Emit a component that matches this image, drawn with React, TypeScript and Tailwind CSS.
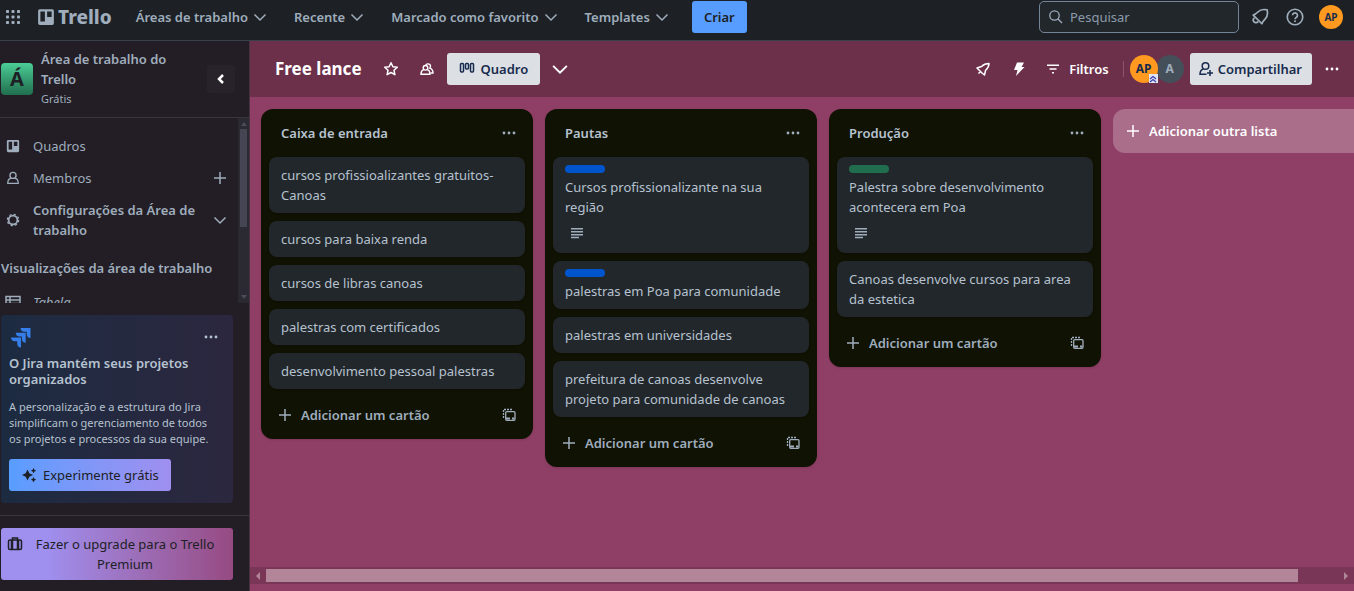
import type { ReactNode } from "react";
import clsx from "clsx";

interface IconProps {
	children: ReactNode;
	className?: string;
	viewBox?: string;
	width?: number;
}

interface Card {
	title: string;
	label?: "blue" | "green";
	description?: boolean;
}

interface List {
	name: string;
	cards: Card[];
}

const lists: List[] = [
	{
		name: "Caixa de entrada",
		cards: [
			{ title: "cursos profissioalizantes gratuitos- Canoas" },
			{ title: "cursos para baixa renda" },
			{ title: "cursos de libras canoas" },
			{ title: "palestras com certificados" },
			{ title: "desenvolvimento pessoal palestras" },
		],
	},
	{
		name: "Pautas",
		cards: [
			{
				title: "Cursos profissionalizante na sua região",
				label: "blue",
				description: true,
			},
			{ title: "palestras em Poa para comunidade", label: "blue" },
			{ title: "palestras em universidades" },
			{ title: "prefeitura de canoas desenvolve projeto para comunidade de canoas" },
		],
	},
	{
		name: "Produção",
		cards: [
			{
				title: "Palestra sobre desenvolvimento acontecera em Poa",
				label: "green",
				description: true,
			},
			{ title: "Canoas desenvolve cursos para area da estetica" },
		],
	},
];

const menus = ["Áreas de trabalho", "Recente", "Marcado como favorito", "Templates"];

const Icon = ({ children, className, viewBox = "0 0 16 16", width = 1.5 }: IconProps) => (
	<svg
		className={clsx("shrink-0", className ?? "w-4 h-4")}
		viewBox={viewBox}
		fill="none"
		stroke="currentColor"
		strokeWidth={width}
		aria-hidden="true"
	>
		{children}
	</svg>
);

const ChevronDown = ({ className }: { className?: string }) => (
	<Icon className={className}>
		<path d="M2.5 5.5 8 11l5.5-5.5" />
	</Icon>
);

const Plus = () => (
	<Icon>
		<path d="M8 2v12M2 8h12" />
	</Icon>
);

const Dots = ({ className }: { className?: string }) => (
	<Icon className={className}>
		<g fill="currentColor" stroke="none">
			<circle cx="3" cy="8" r="1.4" />
			<circle cx="8" cy="8" r="1.4" />
			<circle cx="13" cy="8" r="1.4" />
		</g>
	</Icon>
);

const BoardIcon = ({ className }: { className?: string }) => (
	<Icon className={className}>
		<path
			fill="currentColor"
			stroke="none"
			fillRule="evenodd"
			d="M2.5 1h11A1.5 1.5 0 0 1 15 2.5v11a1.5 1.5 0 0 1-1.5 1.5h-11A1.5 1.5 0 0 1 1 13.5v-11A1.5 1.5 0 0 1 2.5 1ZM3 3v9h4V3H3Zm6 0v5h4V3H9Z"
		/>
	</Icon>
);

const Header = () => (
	<header className="flex h-[41px] shrink-0 items-center border-b border-[#38414a] bg-[#1d2125] pb-1.5 pl-[5px] pr-[11px] text-[#9fadbc]">
		<button aria-label="Mais da Atlassian" className="mr-4">
			<Icon>
				<g fill="currentColor" stroke="none">
					{[1, 6.5, 12].map((y) =>
						[1, 6.5, 12].map((x) => (
							<rect key={`${x}-${y}`} x={x} y={y} width="3" height="3" rx="0.8" />
						))
					)}
				</g>
			</Icon>
		</button>
		<a href="#" className="mr-3 flex items-center gap-[3px]">
			<BoardIcon className="h-[18px] w-[18px]" />
			<span className="text-[19px] leading-5 font-extrabold">Trello</span>
		</a>
		<nav className="flex items-center">
			{menus.map((menu) => (
				<button
					key={menu}
					className="flex h-8 items-center gap-1 pl-3 pr-3.5 font-semibold whitespace-nowrap"
				>
					{menu}
					<ChevronDown />
				</button>
			))}
		</nav>
		<button className="ml-2 h-8 rounded-[3px] bg-[#579dff] px-3 font-semibold text-[#1d2125]">
			Criar
		</button>
		<div className="ml-auto flex items-center gap-3">
			<label className="flex h-8 w-[200px] items-center gap-1.5 rounded-[5px] border border-[#738496] bg-[#22272b] px-2">
				<Icon width={1.3}>
					<circle cx="6.500" cy="6.500" r="4.700" />
					<path d="m10 10 4 4" />
				</Icon>
				<input
					aria-label="Pesquisar"
					placeholder="Pesquisar"
					className="w-full min-w-0 bg-transparent outline-none placeholder:text-[#8c9bab]"
				/>
			</label>
			<button aria-label="Notificações">
				<Icon viewBox="0 0 24 24" className="h-[18px] w-[18px]" width={2.3}>
					<path
						strokeLinejoin="round"
						d="M14.500 21 3 9.500c3-1 4.500-2.500 6.500-4.500C12.500 2 17 1.500 21.500 2.500 22.500 7 22 11.500 19 14.500c-2 2-3.500 3.500-4.500 6.500ZM4.500 13c-1.800 1.800-1.800 4.200-.5 5.600s3.800 1.300 5.600-.5"
					/>
				</Icon>
			</button>
			<button aria-label="Informações" className="mx-0.5 ml-1">
				<Icon viewBox="0 0 24 24" className="h-5 w-5" width={2}>
					<circle cx="12" cy="12" r="9.300" />
					<path d="M9 10a3 3 0 1 1 4.500 2.600c-1 .6-1.500 1-1.500 2.200" />
					<circle cx="12" cy="17.200" r="1.200" fill="currentColor" stroke="none" />
				</Icon>
			</button>
			<button className="h-6 w-6 rounded-full bg-[#ff991f] text-[10px] leading-6 font-bold text-[#172b4d]">
				AP
			</button>
		</div>
	</header>
);

const Sidebar = () => (
	<aside className="flex w-[250px] shrink-0 flex-col border-r border-[#45333f] bg-[#231e25] text-[#9fadbc]">
		<div className="flex h-[77px] shrink-0 items-center border-b border-[#38353d] pl-px pr-3.5">
			<div className="h-8 w-8 shrink-0 rounded-[4px] bg-linear-to-b from-[#4bce97] to-[#216e4e] text-center text-xl leading-8 font-bold text-[#1d2125]">
				Á
			</div>
			<div className="ml-2 flex-1 pr-6">
				<p className="font-semibold">Área de trabalho do Trello</p>
				<p className="text-[11px] leading-5">Grátis</p>
			</div>
			<button
				aria-label="Recolher barra lateral"
				className="flex h-7 w-7 items-center justify-center rounded-[3px] bg-[#28232a] text-white"
			>
				<Icon width={2.5}>
					<path d="M10 4 6 8l4 4" />
				</Icon>
			</button>
		</div>
		<div className="flex min-h-0 flex-1">
			<nav className="flex-1 overflow-hidden pt-3">
				<a href="#" className="flex h-8 items-center gap-3 pl-[5px]">
					<BoardIcon className="h-3.5 w-4" />
					Quadros
				</a>
				<div className="flex h-8 items-center gap-3 pl-[5px] pr-2.5">
					<Icon className="h-3.5 w-4">
						<circle cx="8" cy="5" r="3.500" />
						<path d="M5.500 8.500C3 9 2 10.500 2 14.200h12c0-3.700-1-5.200-3.500-5.700" />
					</Icon>
					<a href="#" className="flex-1">
						Membros
					</a>
					<button aria-label="Adicionar membros">
						<Plus />
					</button>
				</div>
				<button className="flex w-full items-center gap-3 py-1.5 pl-[5px] pr-2.5 text-left font-semibold">
					<Icon className="h-3.5 w-4" width={2}>
						<circle cx="8" cy="8" r="5" />
						<circle cx="8" cy="8" r="6.500" strokeDasharray="2.550 2.550" strokeWidth="1.400" />
					</Icon>
					<span className="flex-1">Configurações da Área de trabalho</span>
					<ChevronDown />
				</button>
				<h2 className="mt-3 mb-2 pl-px font-semibold whitespace-nowrap">
					Visualizações da área de trabalho
				</h2>
				<a href="#" className="flex h-8 items-center gap-3 pl-[5px] italic">
					<Icon className="h-4 w-4">
						<path d="M1 2.500h14v11H1zM1 6h14M1 9.500h14M5 2.500v11" />
					</Icon>
					Tabela
				</a>
			</nav>
			<div className="flex w-[11px] flex-col items-center justify-between bg-[#2b2a32] py-1 text-[#4a4c57]">
				<svg className="h-1 w-1.5 shrink-0" viewBox="0 0 6 4" fill="currentColor">
					<path d="M3 0 6 4H0z" />
				</svg>
				<div className="mt-[3px] h-[98px] w-[7px] shrink-0 bg-[#444653]" />
				<div className="flex-1" />
				<svg className="h-1 w-1.5 shrink-0" viewBox="0 0 6 4" fill="currentColor">
					<path d="M0 0h6L3 4z" />
				</svg>
			</div>
		</div>
		<div className="border-b border-[#38353d] pt-3 pb-3 pl-px pr-4">
			<section className="rounded-[4px] bg-linear-to-r from-[#1c2b41] to-[#2b273f] px-2 pt-2.5 pb-3 text-[#b6c2cf]">
				<div className="mb-1.5 flex items-center justify-between pr-1.5">
					<svg className="h-6 w-6" viewBox="0 0 24 24" fill="#357de8">
						<path d="M11.500 3H21.500v10c-2.300 0-3.800-1.600-3.800-3.800V6.800h-2.400c-2.200 0-3.800-1.600-3.800-3.800Z" />
						<path d="M6.700 7.800h10v10c-2.300 0-3.800-1.600-3.800-3.800v-2.400h-2.400c-2.200 0-3.800-1.600-3.800-3.800Z" />
						<path d="M2 12.500h10v10c-2.300 0-3.800-1.600-3.800-3.800v-2.400H5.800C3.600 16.300 2 14.700 2 12.500Z" />
					</svg>
					<button aria-label="Mais opções">
						<Dots />
					</button>
				</div>
				<h3 className="leading-4 font-semibold">O Jira mantém seus projetos organizados</h3>
				<p className="mt-3 mb-3 pr-2 text-[11px] leading-4">
					A personalização e a estrutura do Jira simplificam o gerenciamento de todos os
					projetos e processos da sua equipe.
				</p>
				<button className="flex h-8 items-center gap-1.5 rounded-[3px] bg-linear-to-r from-[#579dff] to-[#9f8fef] px-3 whitespace-nowrap text-[#1d2125]">
					<Icon>
						<g fill="currentColor" stroke="none">
							<path d="M6.500 2.500 8.300 6.200 12 8 8.300 9.800 6.500 13.500 4.700 9.800 1 8l3.700-1.800z" />
							<path d="m12.500 1 .9 1.800 1.800.9-1.800.9-.9 1.800-.9-1.800-1.800-.9 1.800-.9zM12.500 10l.9 1.800 1.800.9-1.800.9-.9 1.800-.9-1.800-1.800-.9 1.800-.9z" />
						</g>
					</Icon>
					Experimente grátis
				</button>
			</section>
		</div>
		<div className="pt-3 pb-[11px] pl-px pr-4">
			<button className="flex w-full rounded-[3px] bg-linear-to-r from-[#9f8fef] from-20% to-[#964a82] px-1.5 py-1.5 text-[#1d2125]">
				<Icon className="mt-0.5 h-4 w-4">
					<path d="M5.500 4V2h5v2" />
					<rect x="1.500" y="4" width="13" height="9.500" rx="1.500" />
					<path d="M5 4v10M11 4v10" strokeWidth="2.500" />
				</Icon>
				<span className="flex-1 px-2">Fazer o upgrade para o Trello Premium</span>
			</button>
		</div>
	</aside>
);

const BoardHeader = () => (
	<div className="flex h-14 shrink-0 items-center bg-[#6d304b] pl-[25px] pr-3.5 text-white">
		<h1 className="text-[17px] leading-6 font-bold whitespace-nowrap">Free lance</h1>
		<button aria-label="Marcar quadro com estrela" className="ml-[21px]">
			<Icon>
				<path
					strokeLinejoin="round"
					d="m8 1.800 1.900 4 4.400.5-3.300 3 .9 4.400L8 11.500l-3.900 2.200.9-4.400-3.300-3 4.400-.5z"
				/>
			</Icon>
		</button>
		<button aria-label="Visibilidade" className="ml-5">
			<Icon width={1.4}>
				<circle cx="6.500" cy="6.800" r="2.300" />
				<path d="M4.700 8.700C2.800 9.300 2 10.800 2 13.200h9c0-2.400-.8-3.900-2.700-4.500" />
				<path d="M6.800 4.200a2.500 2.500 0 1 1 3.900 3c2.100.7 3.300 2.300 3.300 4.800h-2.500" />
			</Icon>
		</button>
		<button className="ml-3 flex h-8 items-center gap-1.5 rounded-[3px] bg-[#dcdfe4] px-3 font-semibold text-[#172b4d]">
			<Icon width={1.5}>
				<rect x="1.500" y="2.500" width="3" height="8.500" rx="1" />
				<rect x="6.500" y="2.500" width="3" height="5.500" rx="1" />
				<rect x="11.500" y="2.500" width="3" height="8.500" rx="1" />
			</Icon>
			Quadro
		</button>
		<button aria-label="Mais visualizações" className="ml-2.5">
			<Icon className="h-5 w-5">
				<path d="m2.500 5.500 5.500 5.500 5.500-5.500" />
			</Icon>
		</button>
		<div className="ml-auto flex items-center">
			<button aria-label="Power-Ups" className="mr-5">
				<Icon>
					<path
						strokeLinejoin="round"
						d="M14 2.500C10.500 2.500 8.500 3.500 6.500 5.500L2 7l2.500 2.500L7 12l2.500 2 1-4.500c2-2 3.500-3.500 3.500-7ZM5.500 10.500l-2 2"
					/>
				</Icon>
			</button>
			<button aria-label="Automação" className="mr-[18px]">
				<Icon>
					<path
						d="M6 1.500h7L10.500 6h3L5 15l1.500-6H3z"
						fill="currentColor"
						stroke="none"
					/>
				</Icon>
			</button>
			<button className="flex items-center gap-2 font-semibold">
				<Icon>
					<path d="M2 4.200h12M4.500 8h7M7 11.800h2" />
				</Icon>
				Filtros
			</button>
			<div className="ml-3.5 mr-1.5 h-4 w-px bg-[#8b566c]" />
			<div className="mr-1.5 flex">
				<button className="relative z-10 h-7 w-7 rounded-full bg-[#ff991f] text-xs font-bold text-[#172b4d]">
					AP
					<span className="absolute right-0 bottom-0 flex h-[9px] w-[9px] items-center justify-center bg-[#dfe5f5] text-[#3b3fa8]">
						<Icon className="h-2 w-2" width={1.2} viewBox="0 0 8 8">
							<path d="M1 4 4 1.500 7 4M1 7l3-2.500L7 7" />
						</Icon>
					</span>
				</button>
				<button className="-ml-0.5 h-7 w-7 rounded-full bg-[#454f59] text-xs font-bold text-[#9fadbc]">
					A
				</button>
			</div>
			<button className="mr-3 flex h-8 items-center gap-1 rounded-[3px] bg-[#dcdfe4] pr-2.5 pl-2 font-semibold text-[#172b4d]">
				<Icon>
					<circle cx="7.500" cy="5" r="3.300" />
					<path d="M5.500 8C3 8.500 2 10 2 13.300h6.500M12 9v6M9 12h6" />
				</Icon>
				Compartilhar
			</button>
			<button aria-label="Mostrar menu">
				<Dots />
			</button>
		</div>
	</div>
);

const ListColumn = ({ list }: { list: List }) => (
	<section className="flex w-[272px] shrink-0 flex-col gap-2 rounded-xl bg-[#101204] p-2 shadow-sm">
		<div className="flex h-8 items-center justify-between pl-3 pr-2 text-[#b6c2cf]">
			<h2 className="font-semibold">{list.name}</h2>
			<button aria-label="Ações da lista" className="text-[#9fadbc]">
				<Dots />
			</button>
		</div>
		<ol className="flex flex-col gap-2">
			{list.cards.map((card) => (
				<li key={card.title} className="rounded-lg bg-[#22272b] px-3 py-2 text-[#b6c2cf] shadow-sm">
					{card.label && (
						<div
							className={clsx(
								"mb-1 h-2 w-10 rounded-full",
								card.label === "blue" ? "bg-[#0055cc]" : "bg-[#216e4e]"
							)}
						/>
					)}
					<a href="#" className="block">
						{card.title}
					</a>
					{card.description && (
						<div className="flex h-7 items-center pt-1 pl-1 text-[#9fadbc]">
							<Icon>
								<path d="M2 3.700h12M2 6.700h12M2 9.700h12M2 12.500h8" />
							</Icon>
						</div>
					)}
				</li>
			))}
		</ol>
		<div className="flex items-center justify-between pt-0.5 pr-2 pl-2 text-[#9fadbc]">
			<button className="flex h-8 items-center gap-2 font-semibold">
				<Plus />
				Adicionar um cartão
			</button>
			<button aria-label="Criar a partir de modelo">
				<Icon width={1.3}>
					<path d="M2.500 11V2.500H12" strokeDasharray="2 1" />
					<rect x="4.700" y="4.700" width="9.300" height="8.600" rx="1" />
					<path d="M5 11.500h4M11 11.500h2.500" strokeWidth="2" />
				</Icon>
			</button>
		</div>
	</section>
);

const App = () => (
	<div className="flex h-screen flex-col overflow-hidden bg-[#8f3f65] font-['Noto_Sans','Liberation_Sans',sans-serif] text-[13px] leading-5">
		<Header />
		<div className="flex min-h-0 flex-1">
			<Sidebar />
			<main className="flex min-w-0 flex-1 flex-col">
				<BoardHeader />
				<div className="flex min-h-0 flex-1 items-start gap-3 overflow-hidden pt-3 pl-[11px]">
					{lists.map((list) => (
						<ListColumn key={list.name} list={list} />
					))}
					<button className="flex h-11 w-[272px] shrink-0 items-center gap-2 rounded-xl bg-[#aa6d8a] px-3 font-semibold text-white">
						<Plus />
						Adicionar outra lista
					</button>
				</div>
				<div className="mb-[7px] flex h-[17px] shrink-0 items-center gap-1.5 bg-[#7a3657] px-1.5 text-[#b38599]">
					<svg className="h-2 w-1 shrink-0" viewBox="0 0 4 8" fill="currentColor">
						<path d="M4 0v8L0 4z" />
					</svg>
					<div className="mr-10 h-[13px] flex-1 bg-[#b38599]" />
					<svg className="h-2 w-1 shrink-0" viewBox="0 0 4 8" fill="currentColor">
						<path d="M0 0v8l4-4z" />
					</svg>
				</div>
			</main>
		</div>
	</div>
);

export default App;
